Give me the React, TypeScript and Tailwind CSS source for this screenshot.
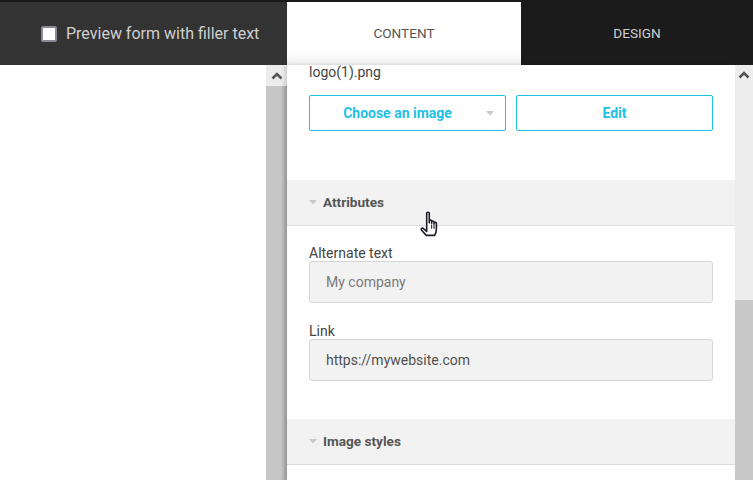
import React from 'react';

const Chevron = () => (
  <svg width="12" height="8" viewBox="0 0 12 8">
    <polyline points="1.5,6.5 6,2 10.5,6.5" fill="none" stroke="#555" strokeWidth="2.6" />
  </svg>
);

const Caret = () => (
  <svg width="8" height="5" viewBox="0 0 8 5" className="mr-[6px]">
    <polygon points="0,0 8,0 4,4.5" fill="#c8c8c8" />
  </svg>
);

const Hand = () => (
  <svg width="22" height="28" viewBox="0 0 20 26" className="absolute left-[420px] top-[211px]">
    <path
      d="M6 2.2c0-1.4 2.4-1.4 2.4 0V11V9.4c0-1.3 2.2-1.3 2.2 0V11.4V10.2c0-1.3 2.2-1.3 2.2 0v1.8V11.4c0-1.3 2.2-1.3 2.2 0v5.6c0 3-1.6 5.6-1.6 5.6H5.6L1.3 17.8c-1-1.2.6-2.6 1.7-1.5L6 19Z"
      fill="#fff"
      stroke="#1e1e2a"
      strokeWidth="1.5"
      strokeLinejoin="round"
    />
    <path d="M10.6 12.5v4M12.8 12.5v4" stroke="#1e1e2a" strokeWidth="1" />
  </svg>
);

const SectionHeader: React.FC<{ title: string }> = ({ title }) => (
  <div className="h-[46px] bg-[#f2f2f2] border-b border-[#dedede] flex items-center pl-[22px] text-[13.6px] font-bold text-[#555]">
    <Caret />
    {title}
  </div>
);

const Field: React.FC<{ label: string; value: string; placeholder?: boolean }> = ({ label, value, placeholder }) => (
  <div className="px-[22px]">
    <div className="text-[14px] leading-[16px] text-[#444]">{label}</div>
    <div
      className={`h-[42px] bg-[#f2f2f2] border border-[#d6d6d6] rounded-[3px] flex items-center pl-[16px] text-[14px] ${
        placeholder ? 'text-[#7a7a7a]' : 'text-[#505050]'
      }`}
    >
      {value}
    </div>
  </div>
);

export default function App() {
  return (
    <div className="relative w-[753px] h-[480px] overflow-hidden bg-white font-['Roboto','Liberation_Sans',sans-serif]">
      {/* top bar */}
      <div className="h-[65px] flex border-t-2 border-[#1a1a1a]">
        <div className="w-[287px] bg-[#333333] flex items-center pl-[41px] gap-[9px]">
          <div className="w-[16px] h-[16px] bg-white border-2 border-[#8a8a9a] rounded-[2px]" />
          <span className="text-[16px] text-[#cfcfcf]">Preview form with filler text</span>
        </div>
        <div className="w-[234px] bg-gradient-to-b from-white from-80% to-[#efefef] flex items-center justify-center text-[13.6px] text-[#555]">
          CONTENT
        </div>
        <div className="flex-1 bg-[#1b1b1b] flex items-center justify-center text-[13.6px] text-[#cfcfcf]">
          DESIGN
        </div>
      </div>

      {/* body */}
      <div className="h-[415px] flex">
        <div className="w-[266px] bg-white" />

        {/* left scrollbar */}
        <div className="w-[21px] flex flex-col">
          <div className="h-[21px] bg-[#ececec] flex items-center justify-center">
            <Chevron />
          </div>
          <div className="flex-1 bg-gradient-to-r from-[#c6c6c6] from-70% to-[#a9a9a9]" />
        </div>

        {/* panel */}
        <div className="w-[448px] bg-white overflow-hidden shadow-[-2px_0_4px_rgba(0,0,0,0.15)]">
          <div className="px-[22px] text-[14px] leading-[14px] text-[#444]">logo(1).png</div>
          <div className="px-[22px] mt-[16px] flex gap-[10px]">
            <div className="relative w-[197px] h-[36px] pr-[20px] border border-[#1ec0e6] rounded-[2px] flex items-center justify-center text-[14px] font-bold text-[#1ec0e6]">
              Choose an image
              <svg width="8" height="5" viewBox="0 0 8 5" className="absolute right-[11px] top-[15px]">
                <polygon points="0,0 8,0 4,4.5" fill="#c8c8c8" />
              </svg>
            </div>
            <div className="w-[197px] h-[36px] border border-[#1ec0e6] rounded-[2px] flex items-center justify-center text-[14px] font-bold text-[#1ec0e6]">
              Edit
            </div>
          </div>
          <div className="mt-[49px]">
            <SectionHeader title="Attributes" />
          </div>
          <div className="pt-[19px] flex flex-col gap-[20px]">
            <Field label="Alternate text" value="My company" placeholder />
            <Field label="Link" value="https://mywebsite.com" />
          </div>
          <div className="mt-[38px]">
            <SectionHeader title="Image styles" />
          </div>
        </div>

        {/* right scrollbar */}
        <div className="flex-1 flex flex-col">
          <div className="h-[235px] bg-[#ededed] pt-[6px] flex justify-center items-start">
            <Chevron />
          </div>
          <div className="flex-1 bg-[#c8c8c8]" />
        </div>
      </div>

      <Hand />
    </div>
  );
}
